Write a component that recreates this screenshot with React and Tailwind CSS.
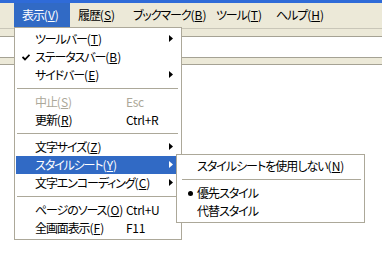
import React from "react";

const font = {
  fontFamily: '"Noto Sans CJK JP", "Liberation Sans", sans-serif',
};

// access key like "(V)" with the letter underlined
const Key = ({ children }) => (
  <span className="tracking-normal">
    (<span className="underline underline-offset-[1px]">{children}</span>)
  </span>
);

const Arrow = ({ white }) => (
  <svg className="absolute right-[7px] top-[5px]" width="4" height="7" viewBox="0 0 4 7">
    <polygon points="0,0 4,3.5 0,7" fill={white ? "#ffffff" : "#000000"} />
  </svg>
);

const Check = () => (
  <svg className="absolute left-[6px] top-[6px]" width="8" height="7" viewBox="0 0 8 7">
    <path d="M0.5 3 L3 5.5 L7.5 0.8" stroke="#000" strokeWidth="1.8" fill="none" />
  </svg>
);

const MenuItem = ({ label, shortcut, arrow, check, active, disabled }) => (
  <div
    className={
      "relative mx-[1px] h-[18px] flex items-center pl-[19px] text-[12px] leading-[18px] " +
      (active ? "bg-[#316AC5] text-white" : disabled ? "text-[#ACA899]" : "text-black")
    }
  >
    {check && <Check />}
    <span className="w-[91px] whitespace-nowrap tracking-[-1.1px]">{label}</span>
    {shortcut && <span className="whitespace-nowrap tracking-[-0.3px]">{shortcut}</span>}
    {arrow && <Arrow white={active} />}
  </div>
);

const Sep = ({ sub }) => (
  <div className="h-[9px] flex items-center">
    <div className={"h-px bg-[#ACA899] w-full " + (sub ? "ml-[5px] mr-[3px]" : "ml-[2px] mr-[3px]")} />
  </div>
);

const SubItem = ({ label, bullet }) => (
  <div className="relative h-[18px] flex items-center pl-[20px] text-[12px] leading-[18px] text-black whitespace-nowrap tracking-[-1px]">
    {bullet && <span className="absolute left-[11px] top-[7px] w-[5px] h-[5px] rounded-full bg-black" />}
    {label}
  </div>
);

const BarItem = ({ w, active, children }) => (
  <div
    className={
      "h-[24px] pl-[8px] flex items-center whitespace-nowrap tracking-[-1.1px] " +
      w +
      (active ? " bg-[#316AC5] text-white" : "")
    }
  >
    {children}
  </div>
);

export default function App() {
  return (
    <div
      className="relative w-[382px] h-[254px] bg-white overflow-hidden [font-feature-settings:'palt']"
      style={font}
    >
      <div className="h-[3px] bg-[#2F6BD8]" />
      <div className="h-[25px] bg-[#ECE9D8] flex pl-[14px] text-[12px] text-black">
        <BarItem w="w-[56px]" active>
          表示<Key>V</Key>
        </BarItem>
        <BarItem w="w-[55px]">
          履歴<Key>S</Key>
        </BarItem>
        <BarItem w="w-[83px]">
          ブックマーク<Key>B</Key>
        </BarItem>
        <BarItem w="w-[60px]">
          ツール<Key>T</Key>
        </BarItem>
        <BarItem w="w-[60px]">
          ヘルプ<Key>H</Key>
        </BarItem>
      </div>
      <div className="h-px bg-[#C9C6B8]" />
      <div className="h-[7px] bg-[#ECE9D8]" />
      <div className="h-px bg-[#A5A294]" />
      <div className="h-[20px] bg-white" />
      <div className="h-px bg-[#A5A294]" />
      <div className="h-[6px] bg-[#ECE9D8]" />
      <div className="h-px bg-[#A5A294]" />

      <div className="absolute left-[14px] top-[27px] w-[168px] bg-white border border-[#ACA899] py-[2px]">
        <MenuItem label={<>ツールバー<Key>T</Key></>} arrow />
        <MenuItem label={<>ステータスバー<Key>B</Key></>} check />
        <MenuItem label={<>サイドバー<Key>E</Key></>} arrow />
        <Sep />
        <MenuItem label={<>中止<Key>S</Key></>} shortcut="Esc" disabled />
        <MenuItem label={<>更新<Key>R</Key></>} shortcut="Ctrl+R" />
        <Sep />
        <MenuItem label={<>文字サイズ<Key>Z</Key></>} arrow />
        <MenuItem label={<>スタイルシート<Key>Y</Key></>} arrow active />
        <MenuItem label={<>文字エンコーディング<Key>C</Key></>} arrow />
        <Sep />
        <MenuItem label={<>ページのソース<Key>O</Key></>} shortcut="Ctrl+U" />
        <MenuItem label={<>全画面表示<Key>F</Key></>} shortcut="F11" />
      </div>

      <div className="absolute left-[176px] top-[154px] w-[189px] bg-white border border-[#ACA899] py-[2px]">
        <SubItem label={<>スタイルシートを使用しない<Key>N</Key></>} />
        <Sep sub />
        <SubItem label="優先スタイル" bullet />
        <SubItem label="代替スタイル" />
      </div>
    </div>
  );
}
